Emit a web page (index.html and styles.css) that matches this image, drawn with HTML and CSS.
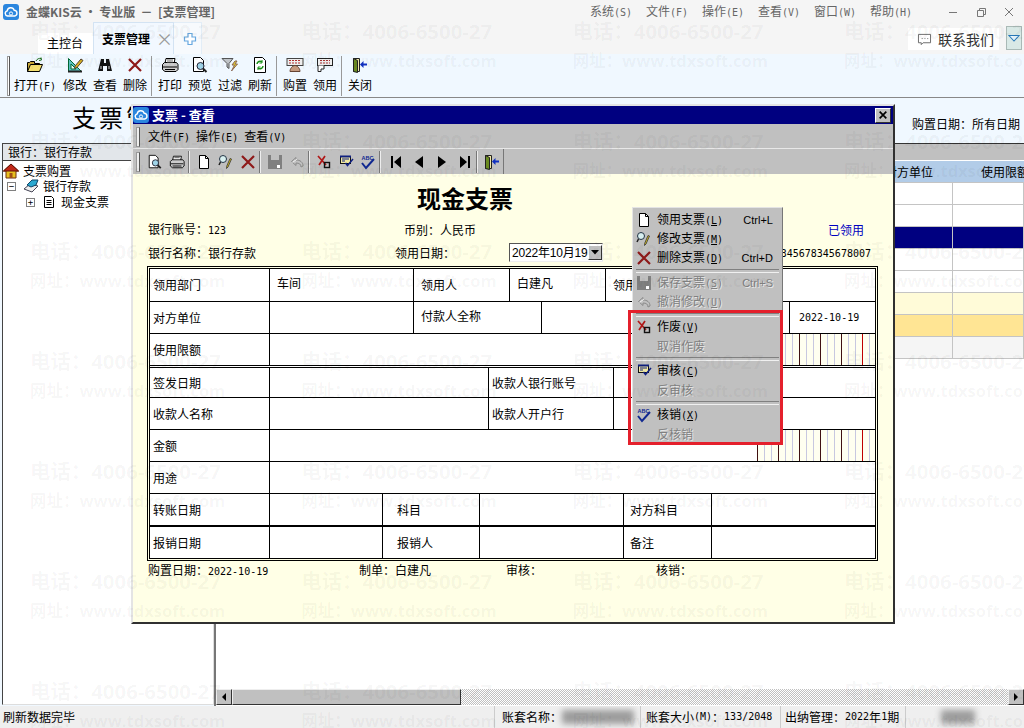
FILE: index.html
```html
<!DOCTYPE html>
<html lang="zh-CN">
<head>
<meta charset="utf-8">
<title>金蝶KIS云 · 专业版</title>
<link rel="stylesheet" href="styles.css">
</head>
<body>
<svg class="defs" aria-hidden="true">
  <symbol id="i-logo" viewBox="0 0 16 16"><rect width="16" height="16" rx="3" fill="#2b86de"/><path d="M4.500 12a2.600 2.600 0 0 1-.3-5.100 3.600 3.600 0 0 1 7-.6 2.900 2.900 0 0 1 .6 5.700z" fill="none" stroke="#fff" stroke-width="1.400"/><circle cx="8" cy="9.500" r="1.600" fill="none" stroke="#fff"/></symbol>
  <symbol id="i-open" viewBox="0 0 18 16"><path d="M1.500 14.500v-9h2l1-1h4v2h5v1.500" fill="#c8a838" stroke="#000"/><path d="M1.500 14.500l3-7h12l-3 7z" fill="#f4e070" stroke="#000"/><path d="M10 4c1-2 3-3 5-2.500M15 .5l.5 2.500-2.500.5" fill="none" stroke="#207020"/></symbol>
  <symbol id="i-ruler" viewBox="0 0 18 16"><path d="M2.500 1.500v13h13z" fill="#5cc0c0" stroke="#063"/><path d="M5 7v5h5z" fill="#e8fff8" stroke="#063"/><path d="M2 14.500h14" stroke="#222" stroke-width="2"/><path d="M9 9l6-7 2 1.500-6 7-2.500 1z" fill="#d8b020" stroke="#543"/></symbol>
  <symbol id="i-bino" viewBox="0 0 16 16"><path d="M4 2h3v4h2V2h3l3 12h-5V9H6v5H1z" fill="#111"/><path d="M3 9h2v3H3zM11 9h2v3h-2z" fill="#777"/></symbol>
  <symbol id="i-x" viewBox="0 0 16 16"><path d="M2 2l12 12M14 2L2 14" stroke="#8e1a1a" stroke-width="2.200" fill="none"/></symbol>
  <symbol id="i-print" viewBox="0 0 18 16"><path d="M5 1.500h9l-1 5H4z" fill="#fff" stroke="#000"/><path d="M1.500 7.500l2-2h12l1.500 2v5l-2 2h-11l-2.500-2z" fill="#ccc" stroke="#000"/><path d="M2 10h14M4 12.500h10" stroke="#000"/><path d="M6 3h6M6 5h6" stroke="#666"/></symbol>
  <symbol id="i-preview" viewBox="0 0 18 16"><path d="M2.500 .5h7l3 3v11h-10z" fill="#fff" stroke="#000"/><circle cx="9.500" cy="9" r="3.500" fill="#9fd4e8" stroke="#223"/><path d="M12 11.500l3.500 3.500" stroke="#222" stroke-width="2"/></symbol>
  <symbol id="i-filter" viewBox="0 0 18 16"><path d="M1 1.500h11L8 6.500v5l-2-1.500v-3.500z" fill="#c0c4c8" stroke="#555"/><path d="M14 4l-3 4h2.500l-3 6 6-7h-2.500l2-3z" fill="#e8d030" stroke="#865"/></symbol>
  <symbol id="i-refresh" viewBox="0 0 16 16"><path d="M2.500 .5h8l3 3v12h-11z" fill="#fff" stroke="#000"/><path d="M5 7a3 3 0 0 1 5-2M11 9a3 3 0 0 1-5 2" fill="none" stroke="#189018" stroke-width="1.500"/><path d="M10 3v3H7.500M6 13v-3h2.500" fill="none" stroke="#189018"/></symbol>
  <symbol id="i-buy" viewBox="0 0 18 16"><rect x="1" y="1.500" width="16" height="7" fill="#eee" stroke="#444"/><path d="M3 3.500h12M3 6h12" stroke="#b03030" stroke-dasharray="2 1"/><path d="M4 14.500c0-3 2.500-6 5-6s5 3 5 6z" fill="#c49a80" stroke="#643"/></symbol>
  <symbol id="i-use" viewBox="0 0 18 16"><rect x="1.500" y="1.500" width="15" height="7" fill="#eee" stroke="#222"/><path d="M4 3.500h10M4 6h10" stroke="#a33" stroke-dasharray="2 1"/><path d="M2 8.500v6h3v-2.500h3V8.500" fill="#fff" stroke="#222"/></symbol>
  <symbol id="i-door" viewBox="0 0 16 16"><path d="M1.500 1.500h6v13h-6z" fill="#f0e8a8" stroke="#222"/><path d="M1.500 1.500l4 2v12l-4-1z" fill="#6a8a20" stroke="#222"/><path d="M15 6.500h-3.500V4L8 7.500l3.500 3.500V8.500H15z" fill="#1030c0"/></symbol>
  <symbol id="i-pdoc" viewBox="0 0 16 16"><path d="M3.500 1.500h6l3 3v10h-9z" fill="#fff" stroke="#000"/><path d="M9.500 1.500v3h3" fill="none" stroke="#000"/></symbol>
  <symbol id="i-edit" viewBox="0 0 16 16"><circle cx="5" cy="5" r="3.500" fill="#d8f0f0" stroke="#234"/><path d="M2.500 8L1 11" stroke="#222" stroke-width="1.500"/><path d="M13.500 5L10 13l-1.500 1.500.2-2.200L12 4.500z" fill="#d8c020" stroke="#333" stroke-width=".8"/></symbol>
  <symbol id="i-disk" viewBox="0 0 16 16"><path d="M1 1h14v14H1z" fill="#808080"/><path d="M4 1h8v5H4z" fill="#c0c0c0"/><path d="M10 11h3v3h-3z" fill="#fff"/></symbol>
  <symbol id="i-undo" viewBox="0 0 16 16"><path d="M2.500 7.500L7 3.500v2.500c4 0 7 2 7 6l-2 1c0-3-2-4-5-4v2.500z" fill="none" stroke="#8a8a8a"/><path d="M3.500 8.500L8 5" stroke="#fff" opacity=".8"/></symbol>
  <symbol id="i-void" viewBox="0 0 16 16"><path d="M2 2l8 9M9 2L3 11" stroke="#b01818" stroke-width="1.700" fill="none"/><rect x="8.500" y="8.500" width="5" height="5" fill="none" stroke="#111" stroke-width="1.400"/></symbol>
  <symbol id="i-audit" viewBox="0 0 16 16"><rect x="2.500" y="2.500" width="10" height="7" fill="#f0e8a0" stroke="#111" stroke-width="1"/><path d="M2 2.500h11" stroke="#102080" stroke-width="2"/><path d="M4 5h7M4 7h3" stroke="#102080"/><path d="M7.500 9l2 2.500L15 5" fill="none" stroke="#102080" stroke-width="1.500"/></symbol>
  <symbol id="i-spell" viewBox="0 0 16 16"><text x="1.500" y="6" class="abc">ABC</text><path d="M2 9l4 5 8-9" fill="none" stroke="#102890" stroke-width="2"/></symbol>
  <symbol id="i-first" viewBox="0 0 16 16"><path d="M3 2h2v12H3zM13 2v12L6 8z" fill="#000"/></symbol>
  <symbol id="i-prev" viewBox="0 0 16 16"><path d="M12 2v12L4 8z" fill="#000"/></symbol>
  <symbol id="i-next" viewBox="0 0 16 16"><path d="M4 2v12l8-6z" fill="#000"/></symbol>
  <symbol id="i-last" viewBox="0 0 16 16"><path d="M3 2v12l7-6zM11 2h2v12h-2z" fill="#000"/></symbol>
  <symbol id="i-home" viewBox="0 0 16 16"><path d="M8 1L.5 8h2.500v7h10V8h2.500z" fill="#e8c020" stroke="#703010"/><path d="M8 1L.5 8h15z" fill="#c02818" stroke="#601008"/><path d="M6.500 10h3v5h-3z" fill="#a05018"/></symbol>
  <symbol id="i-bank" viewBox="0 0 16 16"><path d="M1 11l6-5 8 2-6 6z" fill="#eee" stroke="#445"/><path d="M4 7l5-5h6l-2 5-5 2z" fill="#2aa8d0" stroke="#146"/></symbol>
  <symbol id="i-sheet" viewBox="0 0 12 14"><path d="M1.500 1.500h7l2 2v9h-9z" fill="#fff" stroke="#000"/><path d="M3.500 5.500h5M3.500 7.500h5M3.500 9.500h5" stroke="#000"/></symbol>
  <symbol id="i-chat" viewBox="0 0 16 14"><path d="M1.500 1.500h13v9h-8l-2 2v-2h-3z" fill="#fff" stroke="#666"/><path d="M5 6h1M8 6h1M11 6h1" stroke="#666"/></symbol>
</svg>

<div class="app">
  <header class="titlebar">
    <svg class="logo"><use href="#i-logo"/></svg>
    <span class="apptitle">金蝶KIS云 · 专业版&nbsp; －&nbsp; [支票管理]</span>
    <nav class="topmenu">
      <span>系统<i>(S)</i></span><span>文件<i>(F)</i></span><span>操作<i>(E)</i></span><span>查看<i>(V)</i></span><span>窗口<i>(W)</i></span><span>帮助<i>(H)</i></span>
    </nav>
    <div class="winctl">
      <svg viewBox="0 0 12 12"><path d="M2 6.500h8" stroke="#777"/></svg>
      <svg viewBox="0 0 12 12"><path d="M2.500 4.500h6v6h-6zM4.500 4.500v-2h6v6h-2" fill="none" stroke="#777"/></svg>
      <svg viewBox="0 0 12 12"><path d="M2 2l8 8M10 2l-8 8" stroke="#777"/></svg>
    </div>
  </header>

  <div class="tabbar">
    <div class="tab">主控台</div>
    <div class="tab active"><span class="tabname">支票管理</span><span class="tabx">×</span></div>
    <div class="tab add"><svg viewBox="0 0 14 14"><path d="M5 1.500h4v3.500h3.500v4H9v3.500H5V9H1.500V5H5z" fill="#fff" stroke="#68a8e0" stroke-width="1.200"/></svg></div>
    <div class="contact"><svg><use href="#i-chat"/></svg>联系我们</div>
    <div class="drop"><svg viewBox="0 0 14 10"><path d="M1 1.500h12L7 8z" fill="#e8f8ff" stroke="#2878b8" stroke-width="1.200"/></svg></div>
  </div>

  <div class="toolbar">
    <span class="grip"></span>
    <div class="tbtn wide"><svg><use href="#i-open"/></svg><span>打开<i>(F)</i></span></div>
    <div class="tbtn"><svg><use href="#i-ruler"/></svg><span>修改</span></div>
    <div class="tbtn"><svg><use href="#i-bino"/></svg><span>查看</span></div>
    <div class="tbtn"><svg><use href="#i-x"/></svg><span>删除</span></div>
    <span class="tsep"></span>
    <div class="tbtn"><svg><use href="#i-print"/></svg><span>打印</span></div>
    <div class="tbtn"><svg><use href="#i-preview"/></svg><span>预览</span></div>
    <div class="tbtn"><svg><use href="#i-filter"/></svg><span>过滤</span></div>
    <div class="tbtn"><svg><use href="#i-refresh"/></svg><span>刷新</span></div>
    <span class="tsep"></span>
    <div class="tbtn"><svg><use href="#i-buy"/></svg><span>购置</span></div>
    <div class="tbtn"><svg><use href="#i-use"/></svg><span>领用</span></div>
    <span class="tsep"></span>
    <div class="tbtn"><svg><use href="#i-door"/></svg><span>关闭</span></div>
  </div>

  <div class="head">
    <div class="bigtitle">支票管理</div>
    <div class="headdate">购置日期：所有日期</div>
  </div>

  <div class="workspace">
    <aside class="left">
      <div class="bankbar">银行：银行存款</div>
      <div class="tree">
        <div class="node"><svg class="nicon"><use href="#i-home"/></svg><span>支票购置</span></div>
        <div class="node lvl1"><span class="exp">−</span><svg class="nicon"><use href="#i-bank"/></svg><span>银行存款</span></div>
        <div class="node lvl2"><span class="exp">+</span><svg class="nicon small"><use href="#i-sheet"/></svg><span>现金支票</span></div>
      </div>
    </aside>
    <section class="right">
      <div class="grayband"></div>
      <div class="gridhead grow"><div class="cell end">对方单位</div><div class="cell start">使用限额</div></div>
      <div class="grow"><div class="cell"></div><div class="cell"></div></div>
      <div class="grow"><div class="cell"></div><div class="cell"></div></div>
      <div class="grow navy"><div class="cell"></div><div class="cell"></div></div>
      <div class="grow"><div class="cell"></div><div class="cell"></div></div>
      <div class="grow"><div class="cell"></div><div class="cell"></div></div>
      <div class="grow pale"><div class="cell"></div><div class="cell"></div></div>
      <div class="grow gold"><div class="cell"></div><div class="cell"></div></div>
      <div class="grow mist"><div class="cell"></div><div class="cell"></div></div>
      <div class="spacer"></div>
      <div class="hscroll">
        <span class="sbtn"><svg viewBox="0 0 8 10"><path d="M6 1v8L2 5z" fill="#000"/></svg></span>
        <span class="sthumb"></span>
        <span class="strack"></span>
        <span class="sbtn"><svg viewBox="0 0 8 10"><path d="M2 1v8l4-4z" fill="#000"/></svg></span>
      </div>
    </section>
  </div>

  <footer class="status">
    <div class="st st1">刷新数据完毕</div>
    <div class="st st2">账套名称：<span class="blur b1"></span></div>
    <div class="st st3">账套大小<i>(M)</i>：<i>133/2048</i></div>
    <div class="st st4">出纳管理：<i>2022</i>年<i>1</i>期</div>
    <div class="st st5"><span class="blur b2"></span></div>
  </footer>
</div>

<div class="dialog">
  <div class="dlgtitle">
    <svg class="logo"><use href="#i-logo"/></svg>
    <span>支票 - 查看</span>
    <span class="dlgclose"><svg viewBox="0 0 12 12"><path d="M2 2l8 8M10 2l-8 8" stroke="#000" stroke-width="2"/></svg></span>
  </div>
  <div class="dlgmenu">
    <span class="grip small"></span>
    <span>文件<i>(F)</i></span><span>操作<i>(E)</i></span><span>查看<i>(V)</i></span>
  </div>
  <div class="dlgband">
    <div class="dlgtools">
      <span class="grip small"></span>
      <span class="dbtn"><svg><use href="#i-preview"/></svg></span>
      <span class="dbtn"><svg><use href="#i-print"/></svg></span>
      <span class="dsep"></span>
      <span class="dbtn"><svg><use href="#i-pdoc"/></svg></span>
      <span class="dbtn"><svg><use href="#i-edit"/></svg></span>
      <span class="dbtn"><svg><use href="#i-x"/></svg></span>
      <span class="dsep"></span>
      <span class="dbtn"><svg><use href="#i-disk"/></svg></span>
      <span class="dbtn"><svg><use href="#i-undo"/></svg></span>
      <span class="dsep"></span>
      <span class="dbtn"><svg><use href="#i-void"/></svg></span>
      <span class="dbtn"><svg><use href="#i-audit"/></svg></span>
      <span class="dbtn"><svg><use href="#i-spell"/></svg></span>
      <span class="dsep"></span>
      <span class="dbtn nav"><svg><use href="#i-first"/></svg></span>
      <span class="dbtn nav"><svg><use href="#i-prev"/></svg></span>
      <span class="dbtn nav"><svg><use href="#i-next"/></svg></span>
      <span class="dbtn nav"><svg><use href="#i-last"/></svg></span>
      <span class="dsep"></span>
      <span class="dbtn"><svg><use href="#i-door"/></svg></span>
    </div>
  </div>
  <div class="voucher">
    <h1 class="vtitle">现金支票</h1>
    <div class="info info1"><span class="ia">银行账号：<i>123</i></span><span>币别：人民币</span><span class="status-tag">已领用</span></div>
    <div class="info info2"><span class="ib">银行名称：银行存款</span><span class="ic2">领用日期：</span>
      <span class="datebox"><span class="datetext">2022年10月19</span><span class="datebtn"><svg viewBox="0 0 8 5"><path d="M0 0h8L4 4.500z" fill="#000"/></svg></span></span>
      <span class="acct"><i>12345678345678007</i></span></div>
    <div class="sheet"><div class="sheetin">
      <div class="row h33 ga"><div class="c">领用部门</div><div class="c p7 up">车间</div><div class="c p7">领用人</div><div class="c p7 up">白建凡</div><div class="c p7 last">领用日期</div></div>
      <div class="row h32 gb"><div class="c">对方单位</div><div class="c"></div><div class="c p7 up">付款人全称</div><div class="c"></div><div class="c"></div><div class="c p9 last"><i>2022-10-19</i></div></div>
      <div class="row h34 gc dbl"><div class="c">使用限额</div><div class="c last"><div class="ruled"></div></div></div>
      <div class="row h30 gd"><div class="c">签发日期</div><div class="c"></div><div class="c">收款人银行账号</div><div class="c last"></div></div>
      <div class="row h32 gd"><div class="c">收款人名称</div><div class="c"></div><div class="c">收款人开户行</div><div class="c last"></div></div>
      <div class="row h32 gc"><div class="c">金额</div><div class="c last"><div class="ruled"></div></div></div>
      <div class="row h32 gc"><div class="c">用途</div><div class="c last"></div></div>
      <div class="row h33 ge thick"><div class="c">转账日期</div><div class="c"></div><div class="c p14">科目</div><div class="c"></div><div class="c p6">对方科目</div><div class="c last"></div></div>
      <div class="row h31 ge nob"><div class="c">报销日期</div><div class="c"></div><div class="c p14">报销人</div><div class="c"></div><div class="c p6">备注</div><div class="c last"></div></div>
    </div></div>
    <div class="signs"><span class="s1">购置日期：<i>2022-10-19</i></span><span class="s2">制单：白建凡</span><span class="s3">审核：</span><span>核销：</span></div>
  </div>
</div>

<div class="popup">
  <div class="mi"><svg><use href="#i-pdoc"/></svg><span class="ml">领用支票<i>(<u>L</u>)</i></span><span class="ms">Ctrl+L</span></div>
  <div class="mi"><svg><use href="#i-edit"/></svg><span class="ml">修改支票<i>(<u>M</u>)</i></span></div>
  <div class="mi"><svg><use href="#i-x"/></svg><span class="ml">删除支票<i>(<u>D</u>)</i></span><span class="ms">Ctrl+D</span></div>
  <div class="msep"></div>
  <div class="mi off"><svg><use href="#i-disk"/></svg><span class="ml">保存支票<i>(<u>S</u>)</i></span><span class="ms">Ctrl+S</span></div>
  <div class="mi off"><svg><use href="#i-undo"/></svg><span class="ml">撤消修改<i>(<u>U</u>)</i></span></div>
  <div class="msep"></div>
  <div class="mi"><svg><use href="#i-void"/></svg><span class="ml">作废<i>(<u>V</u>)</i></span></div>
  <div class="mi off"><span class="noicon"></span><span class="ml">取消作废</span></div>
  <div class="msep"></div>
  <div class="mi"><svg><use href="#i-audit"/></svg><span class="ml">审核<i>(<u>C</u>)</i></span></div>
  <div class="mi off"><span class="noicon"></span><span class="ml">反审核</span></div>
  <div class="msep"></div>
  <div class="mi"><svg><use href="#i-spell"/></svg><span class="ml">核销<i>(<u>X</u>)</i></span></div>
  <div class="mi off"><span class="noicon"></span><span class="ml">反核销</span></div>
</div>
<div class="redbox"></div>

<div class="watermark" aria-hidden="true">
  <div><b>电话：4006-6500-27</b><em>网址：www.tdxsoft.com</em></div><div><b>电话：4006-6500-27</b><em>网址：www.tdxsoft.com</em></div><div><b>电话：4006-6500-27</b><em>网址：www.tdxsoft.com</em></div><div><b>电话：4006-6500-27</b><em>网址：www.tdxsoft.com</em></div>
  <div><b>电话：4006-6500-27</b><em>网址：www.tdxsoft.com</em></div><div><b>电话：4006-6500-27</b><em>网址：www.tdxsoft.com</em></div><div><b>电话：4006-6500-27</b><em>网址：www.tdxsoft.com</em></div><div><b>电话：4006-6500-27</b><em>网址：www.tdxsoft.com</em></div>
  <div><b>电话：4006-6500-27</b><em>网址：www.tdxsoft.com</em></div><div><b>电话：4006-6500-27</b><em>网址：www.tdxsoft.com</em></div><div><b>电话：4006-6500-27</b><em>网址：www.tdxsoft.com</em></div><div><b>电话：4006-6500-27</b><em>网址：www.tdxsoft.com</em></div>
  <div><b>电话：4006-6500-27</b><em>网址：www.tdxsoft.com</em></div><div><b>电话：4006-6500-27</b><em>网址：www.tdxsoft.com</em></div><div><b>电话：4006-6500-27</b><em>网址：www.tdxsoft.com</em></div><div><b>电话：4006-6500-27</b><em>网址：www.tdxsoft.com</em></div>
  <div><b>电话：4006-6500-27</b><em>网址：www.tdxsoft.com</em></div><div><b>电话：4006-6500-27</b><em>网址：www.tdxsoft.com</em></div><div><b>电话：4006-6500-27</b><em>网址：www.tdxsoft.com</em></div><div><b>电话：4006-6500-27</b><em>网址：www.tdxsoft.com</em></div>
  <div><b>电话：4006-6500-27</b><em>网址：www.tdxsoft.com</em></div><div><b>电话：4006-6500-27</b><em>网址：www.tdxsoft.com</em></div><div><b>电话：4006-6500-27</b><em>网址：www.tdxsoft.com</em></div><div><b>电话：4006-6500-27</b><em>网址：www.tdxsoft.com</em></div>
  <div><b>电话：4006-6500-27</b><em>网址：www.tdxsoft.com</em></div><div><b>电话：4006-6500-27</b><em>网址：www.tdxsoft.com</em></div><div><b>电话：4006-6500-27</b><em>网址：www.tdxsoft.com</em></div><div><b>电话：4006-6500-27</b><em>网址：www.tdxsoft.com</em></div>
</div>
</body>
</html>
```
FILE: styles.css
```css
* { box-sizing: border-box; }
html, body { margin: 0; padding: 0; }
body {
  width: 1024px; height: 728px; overflow: hidden; position: relative;
  font: 12px/16px "Noto Sans CJK SC", sans-serif; color: #000; background: #fff;
}
i { font: normal 10px/16px "DejaVu Sans Mono", monospace; }
.defs { width: 0; height: 0; position: absolute; }
.abc { font: bold 5.5px "Liberation Sans", sans-serif; fill: #102890; }
svg { display: block; }

.app { display: flex; flex-direction: column; height: 728px; }

/* title bar */
.titlebar { display: flex; align-items: center; height: 23px; padding-left: 3px; background: #f5f5f5; }
.logo { width: 16px; height: 16px; flex: none; }
.apptitle { margin-left: 7px; width: 564px; font-weight: 700; color: #666; white-space: nowrap; }
.topmenu { display: flex; color: #666; }
.topmenu span { width: 56px; white-space: nowrap; }
.winctl { display: flex; margin-left: 21px; gap: 16px; }
.winctl svg { width: 12px; height: 12px; }

/* tabs */
.tabbar { display: flex; align-items: flex-end; height: 31px; padding-left: 38px; background: #f5f5f5; }
.tab { height: 21px; width: 55px; padding-left: 9px; background: #fff; line-height: 20px; white-space: nowrap; }
.tab.active {
  display: flex; align-items: center; height: 32px; width: 81px; padding: 0 0 0 8px; font-weight: 700;
  background: #f2f8ff; border: 1px solid #d3e3f3; border-bottom: 0; border-radius: 1px 1px 0 0;
}
.tabname { flex: none; }
.tabx { flex: none; margin-left: 6px; font-size: 17px; font-weight: 400; color: #999; }
.tab.add { display: flex; align-items: center; height: 32px; width: 28px; padding-left: 9px; background: #f7fafd; border: 1px solid #e2edf7; border-left: 0; border-bottom: 0; }
.tab.add svg { width: 14px; height: 14px; }
.contact {
  display: flex; align-items: center; gap: 6px; margin: 0 7px 4px auto; width: 91px; height: 22px; padding-left: 9px;
  background: #fff; font-size: 14px; color: #333; white-space: nowrap;
}
.contact svg { width: 15px; height: 13px; }
.drop { display: flex; align-items: center; justify-content: center; width: 16px; height: 24px; margin: 0 2px 4px 0; background: #d9e9e6; border: 1px solid #a9b9b6; }
.drop svg { width: 12px; height: 9px; }

/* main toolbar */
.toolbar { display: flex; height: 44px; padding-top: 2px; background: #f0f8ff; border-bottom: 1px solid #888; }
.grip { width: 3px; height: 40px; margin-left: 7px; border: 1px solid #999; border-right-color: #555; background: #fff; }
.grip.small { height: 20px; width: 4px; margin-left: 3px; flex: none; background: #eee; }
.tbtn { display: flex; flex-direction: column; align-items: center; width: 30px; padding-top: 1px; white-space: nowrap; }
.tbtn.wide { width: 50px; }
.tbtn svg { width: 18px; height: 16px; }
.tbtn span { margin-top: 4px; }
.tsep { width: 1px; height: 40px; margin: 0 3px 0 1px; background: #999; border-right: 0; }

/* page head */
.head { display: flex; align-items: flex-end; justify-content: space-between; height: 45px; padding: 0 0 11px 72px; background: #f0f8ff; }
.bigtitle { font-size: 24px; line-height: 30px; letter-spacing: 3px; white-space: nowrap; }
.headdate { margin-right: 4px; white-space: nowrap; }

/* workspace */
.workspace { display: flex; flex: 1; min-height: 0; background: #f0f8ff; }
.left { display: flex; flex-direction: column; width: 214px; flex: none; }
.bankbar { height: 17px; margin-left: 2px; padding-left: 5px; background: #e2e6ea; border-top: 1px solid #444; border-left: 1px solid #444; line-height: 15px; }
.tree { flex: 1; margin: 0 0 1px 2px; padding-top: 2px; background: #fff; border: 1px solid #444; border-right: 1px solid #ddd; border-bottom: 1px solid #ddd; }
.node { display: flex; align-items: center; height: 16px; }
.node .nicon { width: 16px; height: 16px; margin-right: 4px; flex: none; }
.node .nicon.small { width: 12px; height: 14px; margin: 0 6px 0 8px; }
.lvl1 { padding-left: 4px; margin-top: -1px; }
.lvl2 { padding-left: 23px; }
.exp { display: flex; align-items: center; justify-content: center; flex: none; width: 9px; height: 9px; margin-right: 7px; border: 1px solid #808080; font: 9px/7px "DejaVu Sans Mono", monospace; }
.lvl1 .exp { margin-right: 7px; }
.lvl2 .exp { margin-right: 0; }

.right { display: flex; flex-direction: column; flex: 1; min-width: 0; background: #fff; border-left: 2px solid #777; }
.grayband { height: 17px; flex: none; background: #c0c0c0; border-top: 1px solid #333; }
.grow { display: grid; grid-template-columns: 737px 1fr; height: 22px; flex: none; overflow: hidden; border-top: 1px solid #c4c4c4; }
.grow .cell { border-right: 1px solid #c4c4c4; white-space: nowrap; line-height: 21px; }
.gridhead { background: #b2cce8; border-top-color: #fff; }
.gridhead .cell { border-right: 0; }
.end { text-align: right; padding-right: 20px; }
.start { padding-left: 28px; }
.navy { background: #000080; }
.pale { background: #fffbd8; }
.gold { background: #ffe594; }
.mist { height: 23px; background: #f5f5f5; border-bottom: 1px solid #c4c4c4; }
.spacer { flex: 1; }
.hscroll { display: flex; height: 16px; flex: none; margin-bottom: 1px; }
.sbtn { display: flex; align-items: center; justify-content: center; width: 16px; flex: none; background: #c0c0c0; border: 1px solid; border-color: #eee #333 #333 #eee; }
.sbtn svg { width: 8px; height: 10px; }
.sthumb { width: 229px; flex: none; background: #c0c0c0; border: 1px solid; border-color: #eee #333 #333 #eee; }
.strack { flex: 1; background: repeating-conic-gradient(#c0c0c0 0 25%, #fff 0 50%) 0 0 / 2px 2px; }

/* status */
.status { display: flex; height: 22px; flex: none; background: #efefef; line-height: 22px; white-space: nowrap; overflow: hidden; }
.status i { line-height: 22px; }
.st { display: flex; align-items: center; border-right: 1px solid #ccc; }
.st1 { width: 495px; padding-left: 3px; }
.st2 { width: 146px; padding-left: 7px; }
.st3 { width: 140px; padding-left: 5px; }
.st4 { width: 125px; padding-left: 4px; }
.st5 { flex: 1; border: 0; padding-left: 35px; }
.blur { display: block; height: 14px; background: #9c9c9c; filter: blur(3px); }
.b1 { width: 72px; }
.b2 { width: 34px; }

/* dialog window */
.dialog {
  position: absolute; left: 131px; top: 104px; width: 764px; height: 520px; display: flex; flex-direction: column;
  background: #c0c0c0; border: 2px solid; border-color: #e4e4e4 #303030 #303030 #e4e4e4;
}
.dlgtitle { display: flex; align-items: center; gap: 3px; height: 18px; flex: none; margin-bottom: 1px; background: #000080; color: #fff; font-weight: 700; font-size: 13px; }
.dlgclose { display: flex; align-items: center; justify-content: center; margin-left: auto; margin-right: 2px; width: 16px; height: 15px; background: #c0c0c0; border: 1px solid; border-color: #fff #333 #333 #fff; }
.dlgclose svg { width: 10px; height: 10px; }
.dlgmenu { display: flex; align-items: center; height: 23px; flex: none; gap: 6px; white-space: nowrap; }
.dlgmenu .grip { margin-right: 2px; }
.dlgband { height: 26px; flex: none; border-top: 1px solid #e8e8e8; }
.dlgtools { display: flex; align-items: center; width: 371px; height: 25px; border-right: 1px solid #777; background: #c0c0c0; }
.dbtn { display: flex; justify-content: center; width: 22px; flex: none; }
.dbtn svg { width: 16px; height: 16px; }
.dbtn.nav { width: 23px; }
.dlgtools .grip { margin-right: 4px; }
.dsep { width: 2px; height: 22px; margin: 0 3px 0 0; flex: none; background: #eee; border-left: 1px solid #777; }
.voucher { flex: 1; padding: 0 15px; background: #ffffe6; }
.vtitle { width: 634px; margin: 0; text-align: center; font-size: 24px; line-height: 48px; font-weight: 700; }
.info { display: flex; align-items: center; white-space: nowrap; }
.info1 { height: 16px; }
.ia { width: 256px; }
.status-tag { margin-left: auto; margin-right: 14px; color: #0000c0; }
.info2 { height: 19px; margin-top: 5px; }
.ib { width: 247px; }
.ic2 { width: 114px; }
.acct { margin-left: auto; margin-right: 7px; }
.datebox { display: flex; align-items: center; justify-content: space-between; width: 94px; height: 19px; padding: 0 0 0 2px; background: #fff; border: 1px solid; border-color: #555 #eee #eee #555; font-family: "Liberation Sans", "Noto Sans CJK SC", sans-serif; }
.datetext { white-space: nowrap; letter-spacing: -.2px; }
.datebtn { display: flex; align-items: center; justify-content: center; width: 14px; height: 15px; background: #c0c0c0; border: 1px solid; border-color: #fff #333 #333 #fff; }
.datebtn svg { width: 8px; height: 5px; }

/* cheque sheet */
.sheet { margin: 4px 0 0 -1px; width: 731px; height: 295px; padding: 1px; border: 1px solid #000; }
.sheetin { height: 100%; border: 1px solid #000; background: #fff; }
.row { display: grid; border-bottom: 1px solid #000; }
.h30 { height: 30px; } .h31 { height: 31px; } .h32 { height: 32px; } .h33 { height: 33px; } .h34 { height: 34px; }
.dbl { border-bottom: 3px double #000; }
.thick { border-bottom: 2px solid #000; }
.nob { border-bottom: 0; }
.ga { grid-template-columns: 120px 144px 96px 96px 1fr; }
.gb { grid-template-columns: 120px 144px 128px 128px 120px 1fr; }
.gc { grid-template-columns: 120px 1fr; }
.gd { grid-template-columns: 120px 219px 125px 1fr; }
.ge { grid-template-columns: 120px 113px 97px 144px 88px 1fr; }
.c { display: flex; align-items: center; min-width: 0; padding-left: 3px; border-right: 1px solid #000; white-space: nowrap; overflow: hidden; }
.c.last { border-right: 0; }
.gc .c.last { padding: 0; justify-content: flex-end; align-items: stretch; }
.p6 { padding-left: 6px; } .p7 { padding-left: 7px; } .p9 { padding-left: 9px; } .p14 { padding-left: 14px; }
.up { padding-bottom: 4px; }
.ruled {
  width: 118px;
  background:
    linear-gradient(#c00000, #c00000) 105px 0 / 1px 100% no-repeat,
    repeating-linear-gradient(90deg, #401010 0 1px, #fffff0 1px 7px, #c8c8e0 7px 8px, #fffff0 8px 14px, #c8c8e0 14px 15px, #fffff0 15px 21px);
}
.signs { display: flex; height: 16px; margin-top: 1px; white-space: nowrap; }
.s1 { width: 211px; }
.s2 { width: 147px; }
.s3 { width: 150px; }

/* popup menu */
.popup {
  position: absolute; left: 632px; top: 207px; width: 151px; height: 238px; padding-top: 2px;
  background: #c0c0c0; border: 1px solid; border-color: #e4e4e4 #777 #777 #e4e4e4;
}
.mi { display: flex; align-items: center; height: 19px; padding: 0 9px 0 3px; white-space: nowrap; }
.mi svg { width: 16px; height: 16px; flex: none; }
.noicon { width: 16px; flex: none; }
.ml { margin-left: 5px; }
.ms { margin-left: auto; font: 11px/16px "Liberation Sans", sans-serif; }
.mi.off .ml, .mi.off .ms { color: #808080; text-shadow: 1px 1px 0 #e8e8e8; }
.msep { height: 6px; padding-top: 2px; margin: 0 3px; }
.msep::before { content: ""; display: block; height: 2px; border-top: 1px solid #808080; border-bottom: 1px solid #f0f0f0; }
.redbox { position: absolute; left: 628px; top: 310px; width: 155px; height: 135px; border: 3px solid #e4202c; }

/* watermark */
.watermark {
  position: absolute; left: 30px; top: 17px; right: 0; bottom: 0; overflow: hidden;
  display: grid; grid-template-columns: repeat(4, 271.3px); grid-auto-rows: 110px;
  pointer-events: none; color: rgba(0, 0, 0, .045); white-space: nowrap;
}
.watermark b, .watermark em { display: block; font: 700 20.4px/29px "Open Sans", "Noto Sans CJK SC", sans-serif; }
.watermark em { font-size: 16.5px; }
```
